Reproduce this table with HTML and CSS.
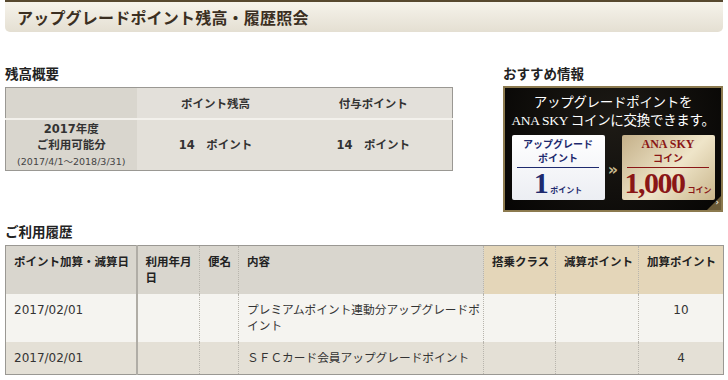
FILE: index.html
```html
<!DOCTYPE html>
<html lang="ja">
<head>
<meta charset="utf-8">
<link rel="stylesheet" href="styles.css">
</head>
<body>
<div class="page">
  <div class="titlebar"><h1>アップグレードポイント残高・履歴照会</h1></div>

  <div class="top">
    <div class="summary">
      <h2>残高概要</h2>
      <table class="bal">
        <colgroup><col class="c1"><col><col></colgroup>
        <tr class="bh">
          <th class="corner"></th>
          <th>ポイント残高</th>
          <th>付与ポイント</th>
        </tr>
        <tr class="bd">
          <th class="year">2017年度<br>ご利用可能分<br><span class="period">(2017/4/1〜2018/3/31)</span></th>
          <td>14　ポイント</td>
          <td>14　ポイント</td>
        </tr>
      </table>
    </div>

    <div class="reco">
      <h2>おすすめ情報</h2>
      <div class="banner">
        <div class="bn-title">アップグレードポイントを<br>ANA SKY コインに交換できます。</div>
        <div class="bn-row">
          <div class="box box-w">
            <div class="box-h"><div>アップグレード</div><div>ポイント</div></div>
            <div class="box-v"><span class="big">1</span><span class="unit">ポイント</span></div>
          </div>
          <div class="arrow">»</div>
          <div class="box box-g">
            <div class="box-h serif"><div>ANA SKY</div><div class="sans">コイン</div></div>
            <div class="box-v"><span class="big">1,000</span><span class="unit">コイン</span></div>
          </div>
        </div>
        <div class="corner-tab"><span>›</span></div>
      </div>
    </div>
  </div>

  <h2 class="hist-h">ご利用履歴</h2>
  <table class="hist">
    <colgroup>
      <col style="width:131px"><col style="width:63px"><col style="width:39px"><col style="width:245px"><col style="width:72px"><col style="width:83px"><col style="width:85px">
    </colgroup>
    <tr>
      <th class="g first">ポイント加算・減算日</th>
      <th class="g">利用年月日</th>
      <th class="g">便名</th>
      <th class="g">内容</th>
      <th class="b">搭乗クラス</th>
      <th class="b">減算ポイント</th>
      <th class="b">加算ポイント</th>
    </tr>
    <tr class="r1">
      <td class="first">2017/02/01</td>
      <td></td>
      <td></td>
      <td class="content">プレミアムポイント連動分アップグレードポイント</td>
      <td></td>
      <td></td>
      <td class="num">10</td>
    </tr>
    <tr class="r2">
      <td class="first">2017/02/01</td>
      <td></td>
      <td></td>
      <td class="content">ＳＦＣカード会員アップグレードポイント</td>
      <td></td>
      <td></td>
      <td class="num">4</td>
    </tr>
  </table>
</div>
</body>
</html>
```

FILE: styles.css
```css
html, body {
  margin: 0;
  padding: 0;
  background: #fff;
}
body {
  font-family: "DejaVu Sans", "Noto Sans CJK JP", sans-serif;
  color: #333;
  font-size: 12px;
}
.page {
  padding: 0 5px;
}
.titlebar {
  height: 30px;
  border-top: 2px solid #57482f;
  background: linear-gradient(#f6f3eb, #e4dfd2);
  border-radius: 0 0 5px 5px;
  display: flex;
  align-items: center;
  padding-left: 12px;
}
.titlebar h1 {
  margin: 0;
  font-family: "Noto Sans CJK JP", sans-serif;
  font-size: 16px;
  font-weight: 700;
  color: #3b2f22;
  letter-spacing: 0.2px;
}
.top {
  display: flex;
  justify-content: space-between;
  margin-top: 33px;
}
.summary {
  width: 448px;
}
h2 {
  margin: 0 0 5px 0;
  font-family: "Noto Sans CJK JP", sans-serif;
  font-size: 13.5px;
  font-weight: 700;
  color: #222;
  line-height: 17px;
}
table {
  border-collapse: collapse;
  table-layout: fixed;
}
.bal {
  width: 448px;
  border: 1px solid #9a9893;
}
.bal .c1 { width: 131px; }
.bal th, .bal td {
  text-align: center;
  font-weight: 700;
  font-size: 11.5px;
  color: #333;
  padding: 0;
}
.bh th {
  height: 30px;
  background: #e3e0da;
  border-bottom: 2px solid #f3f1ec;
}
.bh th.corner {
  background: #d9d6ce;
}
.bd td {
  background: #e3e0d9;
  height: 48px;
  padding-bottom: 2px;
}
.bd th.year {
  background: #d9d6ce;
  line-height: 16px;
  padding: 0;
}
.period {
  font-weight: 400;
  font-size: 9.5px;
  color: #444;
}
.reco {
  width: 220px;
}
.reco h2 {
  margin-bottom: 4px;
}
.banner {
  position: relative;
  width: 220px;
  height: 126px;
  box-sizing: border-box;
  border: 2px solid #8c7a4f;
  background: #0b0a08;
  background-image: radial-gradient(circle at 50% 30%, #1d1a15, #060504);
  display: flex;
  flex-direction: column;
  align-items: center;
}
.bn-title {
  font-family: "Liberation Serif", "Noto Sans CJK JP", serif;
  color: #fff;
  font-size: 13.5px;
  line-height: 18px;
  text-align: center;
  margin-top: 6px;
  white-space: nowrap;
  letter-spacing: -0.3px;
}
.bn-row {
  display: flex;
  align-items: center;
  margin-top: 5px;
}
.box {
  width: 93px;
  height: 65px;
  border-radius: 2px;
  box-sizing: border-box;
  display: flex;
  flex-direction: column;
  align-items: center;
  padding-top: 2px;
}
.box-w {
  background: linear-gradient(#fff, #eceef3);
  color: #1e2a6e;
}
.box-g {
  background: linear-gradient(135deg, #c4b089, #efe5c9 55%, #c9b68c);
  color: #8a1616;
}
.box-h {
  font-family: "Noto Sans CJK JP", sans-serif;
  font-size: 10px;
  font-weight: 700;
  line-height: 14px;
  text-align: center;
  width: 82px;
  padding-bottom: 2px;
  border-bottom: 1px solid currentColor;
}
.box-h.serif {
  font-family: "Liberation Serif", serif;
  font-size: 12px;
}
.box-h .sans {
  font-family: "Noto Sans CJK JP", sans-serif;
  font-size: 10px;
}
.box-v {
  display: flex;
  align-items: baseline;
}
.big {
  font-family: "Liberation Serif", serif;
  font-weight: 700;
  font-size: 30px;
  line-height: 30px;
  letter-spacing: -1.5px;
}
.unit {
  font-family: "Noto Sans CJK JP", sans-serif;
  font-size: 8px;
  font-weight: 700;
  margin-left: 3px;
}
.arrow {
  width: 17px;
  text-align: center;
  color: #c8b98e;
  font-weight: 700;
  font-size: 16px;
  margin-top: 4px;
}
.corner-tab {
  position: absolute;
  right: 0;
  bottom: 0;
  width: 14px;
  height: 14px;
  background: #6b5b38;
  clip-path: polygon(100% 0, 100% 100%, 0 100%);
  color: #fff;
  font-size: 9px;
  line-height: 12px;
  text-align: right;
}
.corner-tab span {
  padding-right: 2px;
}
.hist-h {
  margin-top: 11px;
  margin-bottom: 5px;
}
.hist {
  width: 718px;
  border: 1px solid #9a9893;
}
.hist th, .hist td {
  text-align: left;
  vertical-align: top;
  padding: 8px 2px 8px 8px;
  font-size: 11.5px;
  line-height: 16px;
  border-left: 1px dotted #b8b5ad;
  color: #333;
}
.hist th {
  height: 31px;
  font-weight: 700;
  color: #222;
}
.hist th.g { background: #d9d6ce; }
.hist th.b { background: #e4d6b9; }
.hist .first { border-left: none; border-right: 2px solid #b0ada6; }
.hist tr.r1 td {
  background: #f5f4f0;
  height: 31px;
}
.hist tr.r2 td {
  background: #e4e0d6;
  height: 16px;
}
.hist td { font-size: 12px; }
.hist td.content { font-size: 11.7px; padding-right: 0; }
.hist td.num { text-align: center; padding-left: 4px; padding-right: 4px; }
```
